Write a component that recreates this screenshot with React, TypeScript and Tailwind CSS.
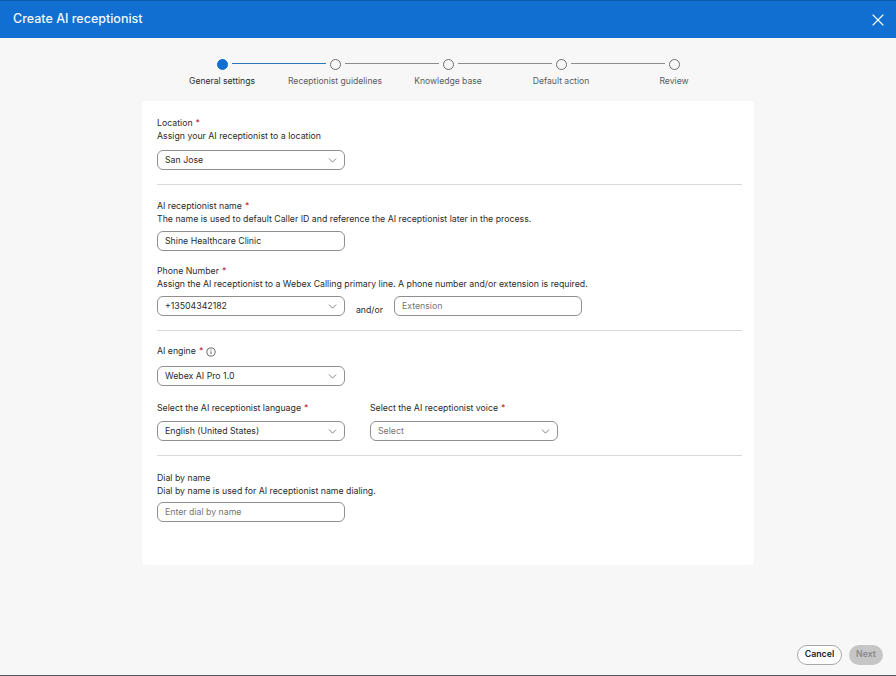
import { ChevronDown, X } from "lucide-react";

const steps = [
  { name: "General settings", active: true },
  { name: "Receptionist guidelines" },
  { name: "Knowledge base" },
  { name: "Default action" },
  { name: "Review" },
];

function Req() {
  return <span className="text-[#c0203a] ml-[3px]">*</span>;
}

function Label({ children }: { children: React.ReactNode }) {
  return <div className="h-[13px] leading-[13px] text-[8.75px] text-[#2b2b2b]">{children}</div>;
}

function Field({
  value,
  placeholder,
  chevron,
  width = "w-[188px]",
}: {
  value?: string;
  placeholder?: string;
  chevron?: boolean;
  width?: string;
}) {
  return (
    <div className={`${width} h-[20px] shrink-0 rounded-[6px] border border-[#8f8f8f] bg-white pl-[7px] pr-[5px] flex items-center justify-between`}>
      <span className={`text-[8.75px] leading-none ${value ? "text-[#2b2b2b]" : "text-[#757575]"}`}>{value ?? placeholder}</span>
      {chevron && <ChevronDown className="w-[13px] h-[13px] text-[#666]" strokeWidth={1.5} />}
    </div>
  );
}

function Rule() {
  return <div className="h-px bg-[#d9d9d9]" />;
}

export default function App() {
  return (
    <div className="w-[896px] h-[676px] bg-[#f7f7f7] flex flex-col overflow-hidden font-['Inter',sans-serif]">
      <header className="h-[38px] shrink-0 bg-[#106fd0] border-t border-[#0b5aa8] pl-[13px] pr-[8px] flex items-center justify-between">
        <h1 className="text-[12.5px] font-medium text-[#f2f7fc]">Create AI receptionist</h1>
        <X className="w-[20px] h-[20px] text-white" strokeWidth={1.3} />
      </header>

      <div className="flex justify-center pt-[20px] h-[63px] shrink-0">
        {steps.map((s, i) => (
          <div key={s.name} className="relative w-[113px] flex flex-col items-center">
            <div className="h-[12px] flex items-center">
              <div
                className={`w-[11px] h-[11px] rounded-full border ${s.active ? "bg-[#106fd0] border-[#106fd0]" : "border-[#6f6f6f] bg-transparent"}`}
              />
            </div>
            {i < 4 && (
              <div className={`absolute top-[5px] left-[66px] w-[94px] h-px ${s.active ? "bg-[#2b79b8]" : "bg-[#8c8c8c]"}`} />
            )}
            <div className={`mt-[5px] whitespace-nowrap text-[8.6px] leading-[12px] ${s.active ? "text-[#2b2b2b]" : "text-[#5c5c5c]"}`}>{s.name}</div>
          </div>
        ))}
      </div>

      <main className="w-[612px] h-[464px] shrink-0 ml-[142px] rounded-[4px] bg-white pl-[15px] pr-[12px] pt-[16px]">
        <Label>Location<Req /></Label>
        <Label>Assign your AI receptionist to a location</Label>
        <div className="mt-[7px] mb-[14px]"><Field value="San Jose" chevron /></div>
        <Rule />

        <div className="mt-[15px]"><Label>AI receptionist name<Req /></Label></div>
        <Label>The name is used to default Caller ID and reference the AI receptionist later in the process.</Label>
        <div className="mt-[5px]"><Field value="Shine Healthcare Clinic" /></div>

        <div className="mt-[14px]"><Label>Phone Number<Req /></Label></div>
        <Label>Assign the AI receptionist to a Webex Calling primary line. A phone number and/or extension is required.</Label>
        <div className="mt-[5px] mb-[14px] flex items-start">
          <Field value="+13504342182" chevron />
          <span className="w-[49px] pt-[8px] text-center text-[8.75px] leading-[12px] text-[#2b2b2b]">and/or</span>
          <Field placeholder="Extension" />
        </div>
        <Rule />

        <div className="mt-[14px] flex items-center">
          <Label>AI engine<Req /></Label>
          <svg className="ml-[3px]" width="10" height="10" viewBox="0 0 10 10" fill="none" stroke="#444" strokeWidth="0.8">
            <circle cx="5" cy="5" r="4.1" />
            <path d="M5 4.4V7.2M5 2.6v.9" />
          </svg>
        </div>
        <div className="mt-[8px]"><Field value="Webex AI Pro 1.0" chevron /></div>

        <div className="mt-[16px] flex gap-[25px]">
          <div>
            <Label>Select the AI receptionist language<Req /></Label>
            <div className="mt-[6px]"><Field value="English (United States)" chevron /></div>
          </div>
          <div>
            <Label>Select the AI receptionist voice<Req /></Label>
            <div className="mt-[6px]"><Field placeholder="Select" chevron /></div>
          </div>
        </div>
        <div className="mt-[14px]"><Rule /></div>

        <div className="mt-[16px]"><Label>Dial by name</Label></div>
        <Label>Dial by name is used for AI receptionist name dialing.</Label>
        <div className="mt-[4px]"><Field placeholder="Enter dial by name" /></div>
      </main>

      <footer className="flex-1 flex justify-end items-start gap-[7px] pt-[80px] pr-[13px] border-b border-[#55555f]">
        <button className="w-[45px] h-[20px] rounded-full border border-[#a8a8a8] bg-white text-[8.75px] font-semibold text-[#222]">Cancel</button>
        <button className="w-[34px] h-[20px] rounded-full bg-[#c6c6c6] text-[8.75px] font-semibold text-[#8a8a8a]">Next</button>
      </footer>
    </div>
  );
}
